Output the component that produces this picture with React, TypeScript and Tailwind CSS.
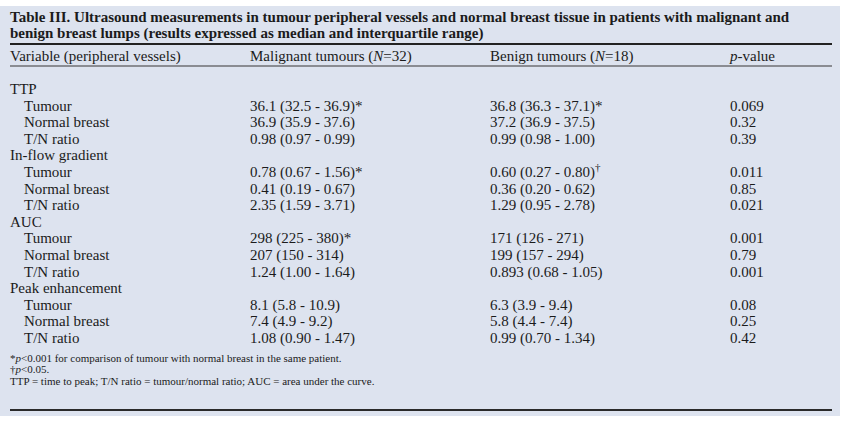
import React from "react";

type Row = { label: string; sub?: boolean; mal?: React.ReactNode; ben?: React.ReactNode; p?: string };

const ROWS: Row[] = [
  { label: "TTP" },
  { label: "Tumour", sub: true, mal: "36.1 (32.5 - 36.9)*", ben: "36.8 (36.3 - 37.1)*", p: "0.069" },
  { label: "Normal breast", sub: true, mal: "36.9 (35.9 - 37.6)", ben: "37.2 (36.9 - 37.5)", p: "0.32" },
  { label: "T/N ratio", sub: true, mal: "0.98 (0.97 - 0.99)", ben: "0.99 (0.98 - 1.00)", p: "0.39" },
  { label: "In-flow gradient" },
  {
    label: "Tumour",
    sub: true,
    mal: "0.78 (0.67 - 1.56)*",
    ben: (
      <>
        0.60 (0.27 - 0.80)<sup className="text-[11px]">†</sup>
      </>
    ),
    p: "0.011",
  },
  { label: "Normal breast", sub: true, mal: "0.41 (0.19 - 0.67)", ben: "0.36 (0.20 - 0.62)", p: "0.85" },
  { label: "T/N ratio", sub: true, mal: "2.35 (1.59 - 3.71)", ben: "1.29 (0.95 - 2.78)", p: "0.021" },
  { label: "AUC" },
  { label: "Tumour", sub: true, mal: "298 (225 - 380)*", ben: "171 (126 - 271)", p: "0.001" },
  { label: "Normal breast", sub: true, mal: "207 (150 - 314)", ben: "199 (157 - 294)", p: "0.79" },
  { label: "T/N ratio", sub: true, mal: "1.24 (1.00 - 1.64)", ben: "0.893 (0.68 - 1.05)", p: "0.001" },
  { label: "Peak enhancement" },
  { label: "Tumour", sub: true, mal: "8.1 (5.8 - 10.9)", ben: "6.3 (3.9 - 9.4)", p: "0.08" },
  { label: "Normal breast", sub: true, mal: "7.4 (4.9 - 9.2)", ben: "5.8 (4.4 - 7.4)", p: "0.25" },
  { label: "T/N ratio", sub: true, mal: "1.08 (0.90 - 1.47)", ben: "0.99 (0.70 - 1.34)", p: "0.42" },
];

const GRID = "grid grid-cols-[240px_240px_240px_1fr]";

export default function App() {
  return (
    <div className="bg-white pt-[6px] font-['Liberation_Serif',serif] text-[#1b1b1b]">
      <div className="h-[410px] w-[840px] bg-[#dde3ef] pl-[10px] pr-[8px] pt-[3px]">
        <h1 className="whitespace-nowrap text-[15px] font-bold leading-[16px]">
          Table III. Ultrasound measurements in tumour peripheral vessels and normal breast tissue in patients with malignant and
          <br />
          benign breast lumps (results expressed as median and interquartile range)
        </h1>
        <div className="mt-[2px] h-[2px] bg-[#222]" />
        <div className={`${GRID} h-[20px] items-center text-[15px]`}>
          <div>Variable (peripheral vessels)</div>
          <div>
            Malignant tumours (<i>N</i>=32)
          </div>
          <div>
            Benign tumours (<i>N</i>=18)
          </div>
          <div>
            <i>p</i>-value
          </div>
        </div>
        <div className="h-[2px] bg-[#8a8c92]" />
        <div className="pt-[14px] text-[15px] leading-[16.6px]">
          {ROWS.map((r, i) => (
            <div key={i} className={GRID}>
              <div className={r.sub ? "pl-[14px]" : ""}>{r.label}</div>
              <div>{r.mal}</div>
              <div>{r.ben}</div>
              <div>{r.p}</div>
            </div>
          ))}
        </div>
        <div className="mt-[6px] text-[11px] leading-[11.5px]">
          <div>
            *<i>p</i>&lt;0.001 for comparison of tumour with normal breast in the same patient.
          </div>
          <div>
            †<i>p</i>&lt;0.05.
          </div>
          <div>TTP = time to peak; T/N ratio = tumour/normal ratio; AUC = area under the curve.</div>
        </div>
        <div className="mt-[22px] h-[2px] bg-[#2a2a2a]" />
      </div>
    </div>
  );
}
